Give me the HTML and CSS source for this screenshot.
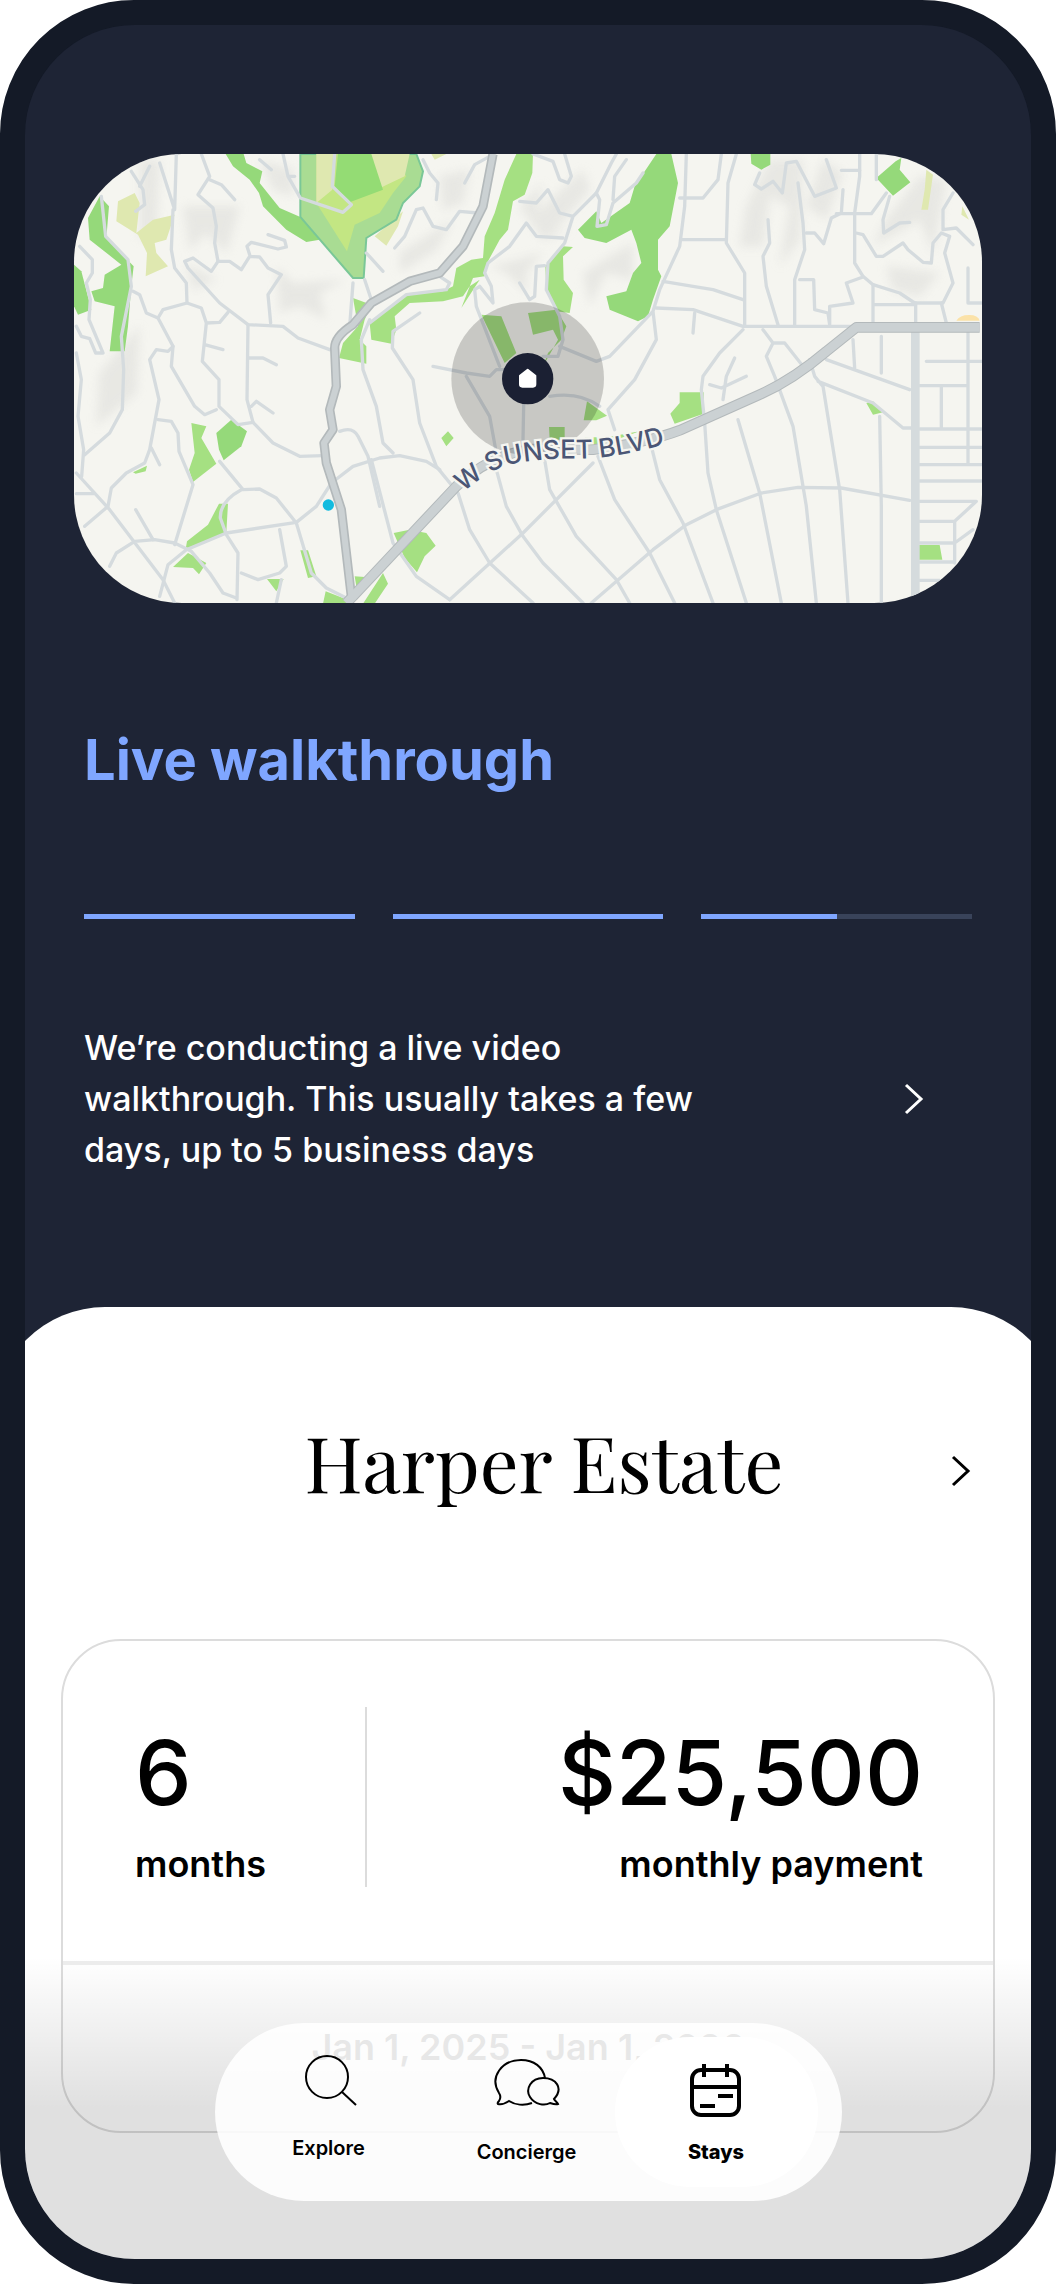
FILE: index.html
```html
<!DOCTYPE html>
<html lang="en">
<head>
    <meta charset="UTF-8">
    <meta name="viewport" content="width=device-width, initial-scale=1.0">
    <title>Harper Estate</title>
    <link rel="stylesheet" href="styles.css">
</head>
<body>
    <div class="phone">
        <main class="screen">
            <section class="status">
                <div class="map">
                    <svg class="map-art" viewBox="43 43 2724 1347" preserveAspectRatio="xMidYMid slice" role="img" aria-label="Map around W Sunset Blvd">
                        <defs>
                            <filter id="soft" x="-50%" y="-50%" width="200%" height="200%"><feGaussianBlur stdDeviation="14"/></filter>
                            <path id="sunset" d="M1210 1057 L1262 1018 Q1320 978 1370 970 Q1470 953 1570 957 Q1680 955 1850 904"/>
                        </defs>
                        <rect class="land" x="0" y="0" width="2800" height="1400"/>

                        <!-- hills -->
                        <g class="hills" filter="url(#soft)">
                            <path d="M240 60 L300 60 L290 280 L240 300Z M370 200 L540 200 L500 340 L440 280 L390 330Z M600 60 L700 90 L700 170 L640 150Z"/>
                            <path d="M650 380 L700 430 L860 420 L780 460 L800 540 L720 500 L660 520Z M380 370 L470 420 L400 450Z M120 700 L240 560 L230 760 L110 860Z"/>
                            <path d="M1020 340 L1180 240 L1130 330 L1020 400Z M1140 110 L1230 90 L1210 190 L1150 210Z M1290 380 L1450 340 L1400 400 L1400 460 L1340 400Z"/>
                            <path d="M1380 200 L1450 130 L1430 220 L1570 90 L1590 150 L1480 280 L1540 270 L1450 300Z M1570 400 L1650 350 L1720 310 L1720 420 L1640 400 L1590 500Z"/>
                            <path d="M2060 200 L2130 60 L2230 60 L2220 300 L2160 380 L2190 200 L2130 170 L2110 320 L2040 320Z M2290 60 L2350 100 L2300 240 L2240 200Z"/>
                            <path d="M2480 240 L2580 110 L2660 120 L2620 340 L2580 240 L2440 320Z M2480 380 L2640 400 L2580 470 L2500 450Z"/>
                        </g>

                        <!-- parks -->
                        <g class="park">
                            <path d="M498 43 L552 43 L560 70 L608 95 L600 130 L660 205 L722 232 L780 300 L740 307 L680 270 L610 200 L598 160 L570 120 L520 80Z"/>
                            <path d="M120 170 L85 235 L90 300 L185 375 L135 405 L130 445 L95 455 L105 485 L165 500 L150 635 L195 635 L205 560 L215 440 L222 380 L140 295 L148 200Z"/>
                            <path d="M43 375 L65 395 L95 510 L55 525 L43 500Z"/>
                            <path d="M1790 43 H1835 L1855 130 L1830 260 L1795 300 L1795 390 L1805 410 L1780 480 L1765 530 L1735 545 L1650 510 L1640 470 L1700 455 L1720 400 L1745 370 L1730 310 L1715 270 L1640 310 L1575 295 L1555 270 L1610 215 L1625 250 L1710 190 L1725 140Z"/>
                            <path d="M2073 43 H2132 V75 L2105 90 L2075 72Z M2508 65 L2525 55 L2520 90 L2552 128 L2500 168 L2450 115Z"/>
                            <path d="M470 880 L515 840 L562 875 L545 920 L492 962 L478 930Z"/>
                        </g>
                        <g class="park-light">
                            <path d="M1370 43 H1420 L1418 100 L1395 165 L1360 185 L1345 270 L1320 300 L1285 365 L1275 410 L1240 415 L1205 505 L1260 420 L1230 440 L1210 470 L1150 485 L1050 490 L1005 530 L1010 570 L995 612 L935 600 L930 550 L1050 460 L1150 455 L1180 440 L1190 385 L1235 360 L1270 355 L1275 290 L1305 220 L1335 120Z"/>
                            <path d="M880 475 L935 495 L915 540 L900 600 L920 620 V672 L838 655 L850 610 L895 560Z"/>
                            <path d="M1510 320 L1540 322 L1510 350 L1512 420 L1540 460 L1530 520 L1490 515 L1460 450 L1457 380Z"/>
                            <path d="M1265 525 L1325 530 L1370 640 L1335 670Z M1405 520 L1490 510 L1520 560 L1505 600 L1465 640 L1450 680 L1495 600 L1480 570 L1420 585Z"/>
                            <path d="M395 850 L440 860 L425 895 L470 972 L400 1027 L388 990 L405 940Z M220 998 L262 978 L258 995 L228 1002Z"/>
                            <path d="M478 1092 L505 1092 L500 1178 L378 1228 L382 1205 L445 1155Z M340 1282 L385 1240 L440 1270 L418 1304 L400 1285Z"/>
                            <path d="M722 1232 L745 1232 L770 1310 L745 1315Z M622 1318 L672 1318 L650 1355Z M790 1392 L798 1355 L850 1375 L870 1392Z M885 1310 L915 1312 L890 1340Z M910 1392 L970 1300 L985 1332 L945 1392Z"/>
                            <path d="M1002 1180 L1050 1170 L1100 1180 L1128 1218 L1095 1250 L1072 1298 L1035 1255Z M1145 895 L1165 875 L1182 895 L1160 920Z"/>
                            <path d="M1468 862 H1515 V900 H1470Z M1582 785 L1642 828 L1610 842 H1572Z M1575 893 H1640 L1740 875 L1600 925Z"/>
                            <path d="M1832 822 L1860 790 V758 H1932 V822 L1845 852Z M2420 790 L2440 785 L2470 818 L2440 825Z M2576 1216 H2640 L2648 1260 H2576Z"/>
                        </g>
                        <path class="scrub" d="M175 185 L225 160 L240 190 L230 280 L280 240 L345 225 L320 300 L285 310 L290 340 L325 380 L258 410 L262 340 L235 285 L170 245Z M2600 90 L2620 105 L2605 210 L2585 210 L2595 150Z M2708 200 L2728 240 L2705 225Z M945 290 L980 318 L1015 260 L1030 215Z M1115 43 H1160 L1125 60Z"/>
                        <path class="reserve" d="M722 43 V232 L880 415 H912 L920 295 L1010 240 L1030 190 L1080 140 L1090 95 L1070 43Z"/>
                        <path class="meadow" d="M770 43 V190 L862 335 L885 255 L960 220 L1000 160 L1040 110 L1000 43Z"/>
                        <path class="scrub" d="M770 43 H820 L818 150 L770 190Z M930 43 H1050 L1035 110 L950 150Z"/>
                        <path class="grove" d="M835 43 H935 L970 150 L870 188 L825 140Z"/>
                        <path class="station" d="M2690 543 Q2700 526 2728 526 T2760 543Z"/>

                        <!-- side streets -->
                        <g class="roads">
                            <path d="M125 170 L138 290 L205 360 L215 440 L185 590 L192 690 L188 810 L150 880 L75 945"/>
                            <path d="M60 320 L98 360 L98 400 L80 430 L92 480 L88 540 L130 640 L108 640 L90 597 L65 590 L50 560"/>
                            <path d="M50 640 L65 720 L55 830 L72 930 L66 1010"/>
                            <path d="M215 95 L250 150 L255 195 L228 215 M300 70 L345 210 L350 43 M340 210 L335 330 L345 385 L380 430 L382 490 L310 510 L295 535 L340 620 L325 635 L290 630 L270 660 L298 780 L270 930 L255 970 L200 1000 L155 1045 L145 1100 L75 1160"/>
                            <path d="M220 455 L240 465 L260 520 L295 535 M240 140 L270 80"/>
                            <path d="M425 43 L450 110 L415 165 L460 205 L470 260 L465 310 L475 365 L455 395 L400 355 L375 365 L385 385 L480 490 L565 555 L670 560 L715 595 L810 630"/>
                            <path d="M450 120 L485 135 L525 180 M475 365 L510 365 L545 390 L570 350 L600 352 L625 385 L665 405 L625 465 L633 550 M570 345 L562 320 L575 308 L655 328 L680 322 L675 302 L625 285"/>
                            <path d="M382 490 L425 505 L440 550 L428 665 L478 720 L478 800 L535 855 L580 848 M440 550 L480 548 L505 518 M435 615 L490 630"/>
                            <path d="M340 620 L335 680 L405 800 L435 825 L470 810 M565 555 L562 780 L580 848 L640 910 L720 950 L790 948 M565 655 L610 655 L650 675 M575 800 L590 785 L640 820"/>
                            <path d="M670 43 L685 110 L722 175 L850 218 L875 195 L818 140 L825 43 M685 110 L705 110 M600 60 L635 90"/>
                            <path d="M295 840 L335 845 L355 880 L358 935 L400 1035 L345 1215 M275 925 L300 975 M228 1110 L280 1200"/>
                            <path d="M50 1000 L150 1110 L310 1320 L345 1390 M50 1062 H105 M150 1280 L170 1240 L225 1205 L285 1200 L345 1210 L395 1235 L450 1300 L490 1360 L530 1375"/>
                            <path d="M300 1370 L325 1275 L380 1230 L500 1180 L710 1148 L770 1100 L815 1030 L880 980 L960 955 L1020 948 L1100 965 L1140 990"/>
                            <path d="M480 965 L550 1050 L600 1048 L650 1075 L710 1150 L755 1300 L800 1345 L860 1375 M545 1050 Q480 1085 482 1135 L500 1185 L535 1240 L532 1380 M545 1300 L595 1320 L660 1300 L680 1280 L660 1170 M665 1320 L650 1390"/>
                            <path d="M840 875 Q880 860 895 890 L925 950 L960 1100 M880 430 L870 560 M915 420 L935 480 M920 340 L970 395 M930 540 L905 600 L910 690 L950 800 L970 910 L1000 940"/>
                            <path d="M1005 325 L1035 290 L1070 210 L1090 205 L1120 260 L1160 270 L1200 215 L1255 220 M1090 60 L1110 100 L1135 130 L1130 180 M1215 130 L1245 75 L1290 50"/>
                            <path d="M930 550 L1040 465 L1160 450 L1170 430 L1140 410 M1080 520 L1000 575 L998 625 L1060 720 L1080 850 L1130 980 L1195 1060 L1230 1170 L1290 1270 L1420 1390"/>
                            <path d="M1380 185 L1430 190 L1465 150 L1500 220 L1540 230 L1610 160 L1655 70 L1670 43 M1540 230 L1515 310 L1465 370 L1460 450 L1500 530 L1510 600 L1495 650 L1450 650"/>
                            <path d="M1275 400 L1285 370 L1350 320 L1400 250 L1430 290 L1510 295 M1275 400 L1295 440 L1300 490 L1260 440 L1245 450 L1250 500 L1320 680 M1380 430 L1410 480 L1425 470 L1430 380 L1455 378"/>
                            <path d="M1420 43 L1480 65 L1500 120 L1525 130 L1535 110 L1515 43 M1610 160 L1620 180 L1612 260 L1640 255 L1660 190 L1730 130 L1750 100 M1660 180 L1665 110 L1700 60"/>
                            <path d="M1880 43 L1875 200 L1860 320 L1800 450 L1780 515 L1650 650 L1610 665 L1500 620 M1780 515 L1790 600 L1725 720 L1645 810 L1665 870 M1870 300 H2000 M1810 425 L1900 440 L1960 450 L2050 480 M1790 505 L1900 510 L2050 560 H2380"/>
                            <path d="M1860 175 L1930 175 L1975 120 L1985 43 M2030 43 L2005 130 L2000 310 L2055 400 L2055 560 M2125 240 L2130 310 L2110 350 L2120 440 L2155 555"/>
                            <path d="M2100 100 L2085 135 L2105 148 L2140 125 L2168 160 L2180 70 L2210 65 L2265 170 L2330 145 L2300 60 M2215 130 L2230 250 L2235 330 L2205 420 L2205 555 M2240 280 L2265 280 L2292 312 L2315 235 L2345 220 L2350 150"/>
                            <path d="M2400 43 V110 L2385 220 L2385 370 L2410 410 L2440 435 L2520 460 L2565 490 L2650 490 L2680 430 L2655 340 L2670 290 L2645 280 L2620 310 L2615 370 L2590 368 L2545 330 L2530 310 L2470 350 L2450 350 L2410 285 L2390 280"/>
                            <path d="M2345 92 H2400 M2330 222 H2435 L2480 160 M2450 43 V120 M2490 170 L2470 240 L2472 280 L2520 250 L2550 248 M2680 160 L2650 210 V270 L2690 265 L2740 315"/>
                            <path d="M2220 420 H2262 L2265 510 L2305 520 L2310 555 V500 L2380 490 L2360 430 L2410 412 M2440 435 V550 M2440 495 H2560 M2568 490 V550 M2645 490 L2660 550 M2725 385 V490 H2765"/>
                            <path d="M2050 570 L1980 640 L1930 710 L1925 750 L1935 850 L1945 1000 L1970 1110 L2060 1390 M1905 520 L1900 580 M2110 570 L2140 610 L2120 650 L2145 710 L2200 860 L2240 1100 L2270 1390 M2140 610 L2175 610 L2230 680"/>
                            <path d="M2250 660 L2265 710 L2290 740 L2340 1050 L2365 1390 M2275 725 L2440 790 L2530 865 H2560 M2300 660 L2550 750 M2380 600 L2385 685 M2465 590 V700 M2460 830 L2465 1100 V1390"/>
                            <path d="M1990 780 L2000 710 L2025 655 M1950 735 L1985 745 L2060 710"/>
                            <path d="M2035 840 L2100 1060 L2165 1390 M1170 1380 L1390 1180 L1600 970 M1595 1390 L1780 1230 L1880 1155 L1970 1110 L2105 1060 L2215 1043 L2345 1045 L2550 1082"/>
                            <path d="M1310 990 L1340 1100 L1390 1190 L1450 1270 L1570 1390 M1455 960 L1470 1050 L1550 1190 L1670 1320 L1710 1390 M1615 950 L1665 1080 L1770 1240 L1845 1390 M1775 920 L1800 1020 L1870 1150 L1960 1390"/>
                            <path d="M935 960 L1000 1210 L1070 1310 L1170 1380 M1220 700 L1290 710 L1310 690 H1400 M1220 700 L1120 680 M1220 710 L1290 830 L1310 940 M1395 650 L1390 900 M1470 770 Q1560 755 1620 800"/>
                            <path d="M2580 738 H2725 M2580 868 H2765 M2580 923 H2765 M2580 975 H2765 M2580 1024 H2765 M2580 1085 H2750 L2685 1145 H2580 M2685 1145 V1270 M2580 1210 H2685 L2740 1170 M2580 1267 H2685 M2580 1322 H2640 M2645 740 V865 M2725 575 V970 M2600 665 H2765"/>
                        </g>

                        <!-- boulevards -->
                        <path class="avenue" d="M2567 575 V1390"/>
                        <g class="blvd-edge">
                            <path class="canyon" d="M1300 43 L1270 200 L1210 320 L1140 400 L1050 425 L935 490 L880 555 Q825 590 825 625 L830 740 L810 810 L820 870 L793 910 L800 970 L845 1110 L875 1370"/>
                            <path class="sunset-road" d="M860 1390 L880 1370 L1190 1040 Q1290 945 1420 928 L1600 930 Q1760 910 1860 872 L2100 765 Q2200 720 2300 635 L2390 563 H2760"/>
                        </g>
                        <g class="blvd">
                            <path class="canyon" d="M1300 43 L1270 200 L1210 320 L1140 400 L1050 425 L935 490 L880 555 Q825 590 825 625 L830 740 L810 810 L820 870 L793 910 L800 970 L845 1110 L875 1370"/>
                            <path class="sunset-road" d="M860 1390 L880 1370 L1190 1040 Q1290 945 1420 928 L1600 930 Q1760 910 1860 872 L2100 765 Q2200 720 2300 635 L2390 563 H2760"/>
                        </g>

                        <!-- home and current position -->
                        <circle class="halo" cx="1404" cy="717" r="229"/>
                        <circle class="pin" cx="1404" cy="717" r="77"/>
                        <path class="house" d="M1404 690 L1427 708 V734 Q1427 741 1420 741 H1388 Q1381 741 1381 734 V708Z"/>
                        <circle class="here" cx="806" cy="1096" r="17"/>

                        <text class="street-name"><textPath href="#sunset">W SUNSET BLVD</textPath></text>
                    </svg>
                </div>

                <div class="progress">
                    <h1 class="progress-title">Live walkthrough</h1>
                    <div class="steps">
                        <div class="step"><div class="step-fill" style="width: 100%"></div></div>
                        <div class="step"><div class="step-fill" style="width: 100%"></div></div>
                        <div class="step"><div class="step-fill" style="width: 50%"></div></div>
                    </div>
                    <div class="progress-note">
                        <p>We’re conducting a live video walkthrough. This usually takes a few days, up to 5 business days</p>
                        <button class="chevron" type="button" aria-label="Walkthrough details">
                            <svg viewBox="0 0 20 32"><path d="M2 2 L17 16 L2 30"/></svg>
                        </button>
                    </div>
                </div>
            </section>

            <section class="sheet">
                <header class="sheet-head">
                    <h2>Harper Estate</h2>
                    <button class="chevron" type="button" aria-label="Open Harper Estate">
                        <svg viewBox="0 0 20 32"><path d="M2 2 L17 16 L2 30"/></svg>
                    </button>
                </header>

                <div class="terms">
                    <div class="terms-row">
                        <div class="term">
                            <div class="value">6</div>
                            <div class="label">months</div>
                        </div>
                        <div class="term term-pay">
                            <div class="value">$25,500</div>
                            <div class="label">monthly payment</div>
                        </div>
                    </div>
                    <div class="dates">Jan 1, 2025 - Jan 1, 2026</div>
                </div>
            </section>

            <div class="dock">
                <nav class="tabs">
                    <a class="tab tab-explore" href="#explore">
                        <svg class="icon" viewBox="0 0 60 60"><circle cx="28" cy="28" r="21"/><path d="M43 43 L57 56"/></svg>
                        Explore
                    </a>
                    <a class="tab" href="#concierge">
                        <svg class="icon icon-chat" viewBox="0 0 68 60">
                            <path d="M39 50 C31 53 22 52 16 48 C13 50 9 52 5 51 C4 50 5 49 6 48 C8 45 8 43 6 40 C-4 24 9 7 28 7 C41 7 50 14 52 25"/>
                            <path d="M61 46 C71 35 63 25 50 25 C38 25 32 36 37 44 C42 52 52 53 57 50 C60 51 63 52 65 51 C64 49 62 48 61 46Z"/>
                        </svg>
                        Concierge
                    </a>
                    <a class="tab active" href="#stays" aria-current="page">
                        <svg class="icon icon-calendar" viewBox="0 0 60 60">
                            <rect x="6" y="10" width="47" height="45" rx="9"/>
                            <path d="M6 27 H53 M18 4 V17 M41 4 V17 M32 36 H47 M14 46 H29"/>
                        </svg>
                        Stays
                    </a>
                </nav>
            </div>
        </main>
    </div>
</body>
</html>
```

FILE: styles.css
```css
* {
    box-sizing: border-box;
}
body {
    margin: 0;
    background-color: #fff;
    color: #000;
    font-family: Inter, "Liberation Sans", sans-serif;
}
h1, h2, p {
    margin: 0;
}
.phone {
    border: 25px solid #141a27;
    border-radius: 134px;
    background-color: #141a27;
}
.screen {
    position: relative;
    overflow: hidden;
    border-radius: 110px;
    background-color: #1e2435;
}

/* map */
.status {
    padding: 129px 49px 0;
}
.map {
    overflow: hidden;
    border-radius: 108px;
    aspect-ratio: 908 / 449;
}
.map-art {
    display: block;
    width: 100%;
    height: 100%;
}
.land { fill: #f5f5f0; }
.hills { fill: #dfdfdb; opacity: 0.6; }
.park { fill: #95d97a; }
.park-light { fill: #a5e082; }
.scrub { fill: #dfe8b0; }
.reserve { fill: #a9dc93; stroke: #7ac797; stroke-width: 6px; }
.meadow { fill: #c3e683; }
.grove { fill: #94dc74; }
.station { fill: #fbe2a8; }
.roads {
    fill: none;
    stroke: #d5dbde;
    stroke-width: 10px;
    stroke-linejoin: round;
    stroke-linecap: round;
}
.avenue { fill: none; stroke: #d5dbdd; stroke-width: 26px; }
.blvd, .blvd-edge { fill: none; stroke-linejoin: round; }
.blvd-edge { stroke: #b3b9bb; }
.blvd { stroke: #cbd1d3; }
.blvd-edge .canyon { stroke-width: 28px; }
.blvd .canyon { stroke-width: 18px; }
.blvd-edge .sunset-road { stroke-width: 32px; }
.blvd .sunset-road { stroke-width: 26px; }
.halo { fill: #000; opacity: 0.18; }
.pin { fill: #1b2033; }
.house { fill: #fff; stroke: #fff; stroke-width: 6px; stroke-linejoin: round; }
.here { fill: #12bbdf; }
.street-name {
    font-size: 78px;
    font-weight: 500;
    fill: #4b5675;
    stroke: #f5f5f0;
    stroke-width: 14px;
    paint-order: stroke;
}

/* walkthrough progress */
.progress {
    padding: 122px 10px 132px;
}
.progress-title {
    color: #7fa6ff;
    font-size: 56px;
    line-height: 70px;
    font-weight: 700;
}
.steps {
    display: flex;
    gap: 38px;
    margin-top: 119px;
}
.step {
    flex: 1;
    height: 5px;
    background-color: #39435a;
}
.step-fill {
    height: 100%;
    background-color: #7fa6ff;
}
.progress-note {
    display: flex;
    align-items: center;
    justify-content: space-between;
    margin-top: 103px;
    padding-right: 48px;
}
.progress-note p {
    max-width: 640px;
    color: #fff;
    font-size: 34px;
    line-height: 51px;
    font-weight: 500;
}
.chevron {
    display: block;
    padding: 0;
    border: none;
    background: none;
    color: #fff;
    cursor: pointer;
}
.chevron svg {
    display: block;
    width: 20px;
    height: 32px;
    fill: none;
    stroke: currentColor;
    stroke-width: 3px;
}

/* estate sheet, a little wider than the screen so the corners run off it */
.sheet {
    margin: 0 -31px;
    padding: 112px 67px 126px;
    border-radius: 111px 111px 0 0;
    background-color: #fff;
}
.sheet-head {
    display: grid;
    grid-template-columns: 1fr auto 1fr;
    align-items: center;
    padding: 0 24px 0 56px;
}
.sheet-head h2 {
    grid-column: 2;
    padding-bottom: 20px;
    font-family: "Playfair Display", "Liberation Serif", serif;
    font-size: 77px;
    line-height: 84px;
    font-weight: 400;
}
.sheet-head .chevron {
    justify-self: end;
    color: #000;
}
.terms {
    margin-top: 116px;
    border: 2px solid #dcdcdc;
    border-radius: 60px;
}
.terms-row {
    display: flex;
    padding: 66px 70px 74px 72px;
}
.term {
    display: flex;
    flex-direction: column;
    gap: 13px;
    height: 180px;
    padding-top: 10px;
}
.term:first-child {
    width: 232px;
    border-right: 2px solid #dcdcdc;
}
.term-pay {
    flex: 1;
    text-align: right;
}
.value {
    font-size: 90px;
    line-height: 112px;
    font-weight: 500;
}
.label {
    font-size: 36px;
    line-height: 44px;
    font-weight: 600;
}
.dates {
    padding: 60px 0 62px;
    border-top: 4px solid #ededed;
    color: #444;
    font-size: 36px;
    line-height: 44px;
    font-weight: 600;
    text-align: center;
}

/* tab bar floating over the sheet */
.dock {
    position: absolute;
    left: 0;
    right: 0;
    bottom: 0;
    display: flex;
    justify-content: center;
    padding: 66px 0 58px;
    background: linear-gradient(rgba(0, 0, 0, 0), rgba(0, 0, 0, 0.12) 150px);
}
.tabs {
    display: flex;
    align-items: center;
    padding: 14px 24px;
    border-radius: 90px;
    background-color: rgba(255, 255, 255, 0.88);
}
.tab {
    display: flex;
    flex-direction: column;
    align-items: center;
    justify-content: center;
    gap: 27px;
    width: 176px;
    height: 150px;
    padding-bottom: 7px;
    border-radius: 75px;
    color: #000;
    font-size: 20px;
    line-height: 24px;
    font-weight: 600;
    text-decoration: none;
}
.tab-explore {
    width: 180px;
    margin-right: 20px;
    padding-bottom: 16px;
}
.tab.active {
    gap: 20px;
    width: 203px;
    padding-bottom: 0;
    background-color: #fff;
    font-weight: 800;
}
.icon {
    width: 60px;
    height: 60px;
    fill: none;
    stroke: currentColor;
    stroke-width: 2px;
}
.icon-chat {
    width: 68px;
}
.icon-calendar {
    stroke-width: 4px;
}
```
